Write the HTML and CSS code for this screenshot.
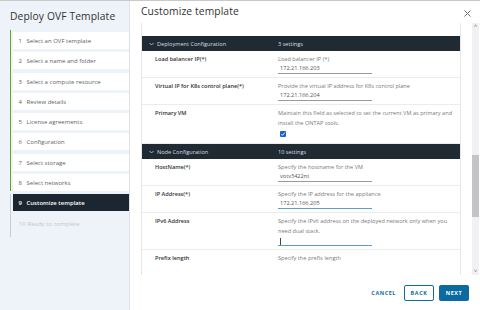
FILE: index.html
```html
<!DOCTYPE html>
<html lang="en">
<head>
<meta charset="utf-8">
<title>Deploy OVF Template</title>
<link rel="stylesheet" href="styles.css">
</head>
<body>
<div class="window">
  <aside class="sidebar">
    <h1 class="wiz-title">Deploy OVF Template</h1>
    <div class="steps">
      <div class="track done">
        <div class="step"><span class="num">1</span>Select an OVF template</div>
        <div class="step"><span class="num">2</span>Select a name and folder</div>
        <div class="step"><span class="num">3</span>Select a compute resource</div>
        <div class="step"><span class="num">4</span>Review details</div>
        <div class="step"><span class="num">5</span>License agreements</div>
        <div class="step"><span class="num">6</span>Configuration</div>
        <div class="step"><span class="num">7</span>Select storage</div>
        <div class="step"><span class="num">8</span>Select networks</div>
      </div>
      <div class="track todo">
        <div class="step active"><span class="num">9</span>Customize template</div>
        <div class="step disabled"><span class="num">10</span>Ready to complete</div>
      </div>
    </div>
  </aside>
  <main class="main">
    <header class="main-head">
      <h2 class="page-title">Customize template</h2>
      <span class="close" aria-label="Close">
        <svg width="7" height="7" viewBox="0 0 7 7"><path d="M0.5 0.5 L6.5 6.5 M6.5 0.5 L0.5 6.5" stroke="#6b6b6b" stroke-width="1" fill="none"/></svg>
      </span>
    </header>
    <div class="content">
      <div class="panel">
        <div class="group-head">
          <div class="gh-name"><span class="chev"><svg width="5" height="4" viewBox="0 0 5 4"><path d="M0.5 1 L2.5 3 L4.5 1" stroke="#cfd4d8" stroke-width="0.8" fill="none"/></svg></span>Deployment Configuration</div>
          <div class="gh-count">3 settings</div>
        </div>
        <div class="row">
          <div class="label">Load balancer IP(*)</div>
          <div class="value">
            <div class="desc">Load balancer IP (*)</div>
            <div class="input">172.21.166.203</div>
          </div>
        </div>
        <div class="row">
          <div class="label">Virtual IP for K8s control plane(*)</div>
          <div class="value">
            <div class="desc">Provide the virtual IP address for K8s control plane</div>
            <div class="input">172.21.166.204</div>
          </div>
        </div>
        <div class="row">
          <div class="label">Primary VM</div>
          <div class="value">
            <div class="desc">Maintain this field as selected to set the current VM as primary and install the ONTAP tools.</div>
            <span class="checkbox"><svg width="6" height="6" viewBox="0 0 6 6"><path d="M1.3 3.1 L2.5 4.3 L4.8 1.6" stroke="#fff" stroke-width="0.9" fill="none"/></svg></span>
          </div>
        </div>
        <div class="group-head">
          <div class="gh-name"><span class="chev"><svg width="5" height="4" viewBox="0 0 5 4"><path d="M0.5 1 L2.5 3 L4.5 1" stroke="#cfd4d8" stroke-width="0.8" fill="none"/></svg></span>Node Configuration</div>
          <div class="gh-count">10 settings</div>
        </div>
        <div class="row">
          <div class="label">HostName(*)</div>
          <div class="value">
            <div class="desc">Specify the hostname for the VM</div>
            <div class="input">votv3422nt</div>
          </div>
        </div>
        <div class="row">
          <div class="label">IP Address(*)</div>
          <div class="value">
            <div class="desc">Specify the IP address for the appliance</div>
            <div class="input focus">172.21.166.205</div>
          </div>
        </div>
        <div class="row">
          <div class="label">IPv6 Address</div>
          <div class="value">
            <div class="desc">Specify the IPv6 address on the deployed network only when you need dual stack.</div>
            <div class="input focus"><span class="caret"></span></div>
          </div>
        </div>
        <div class="row">
          <div class="label">Prefix length</div>
          <div class="value">
            <div class="desc">Specify the prefix length</div>
            <div class="input empty"></div>
          </div>
        </div>
      </div>
      <div class="scrollbar">
        <span class="arrow">&#708;</span>
        <div class="sb-track"><div class="sb-thumb"></div></div>
        <span class="arrow">&#709;</span>
      </div>
    </div>
    <footer class="actions">
      <span class="btn link">CANCEL</span>
      <span class="btn outline">BACK</span>
      <span class="btn solid">NEXT</span>
    </footer>
  </main>
</div>
</body>
</html>
```
FILE: styles.css
```css
* { box-sizing: border-box; }
html, body { margin: 0; padding: 0; }
body {
  width: 480px;
  height: 310px;
  overflow: hidden;
  background: #fff;
  font-family: "Open Sans", "Liberation Sans", sans-serif;
  color: #333;
}
.window {
  display: flex;
  width: 480px;
  height: 310px;
  border-top: 1px solid #c9c9c9;
}
.sidebar {
  width: 130px;
  flex: none;
  background: #eef2f9;
  border-right: 1px solid #dde1e8;
  padding-top: 8px;
}
.wiz-title {
  margin: 0 0 0 10px;
  font-size: 10.3px;
  font-weight: 400;
  line-height: 14px;
  color: #333;
  letter-spacing: 0.1px;
}
.steps {
  margin: 7px 0 0 10px;
}
.track {
  border-left: 1.5px solid #62a420;
  padding-left: 1.5px;
}
.track.done { padding-top: 2px; }
.track.todo { border-left-color: #c8ccd2; padding-bottom: 5px; }
.step {
  height: 17px;
  margin-bottom: 3.3px;
  background: #fff;
  font-size: 6px;
  line-height: 18px;
  color: #5f5f5f;
  padding-left: 6px;
  white-space: nowrap;
}
.track.todo .step:last-child { margin-bottom: 0; }
.step .num { display: inline-block; width: 8px; }
.step.active {
  background: #1c2630;
  color: #fff;
  font-weight: 600;
}
.step.disabled {
  background: transparent;
  color: #c3c7cd;
}
.step.disabled .num { width: 9px; }

.main {
  flex: 1;
  display: flex;
  flex-direction: column;
  min-width: 0;
}
.main-head {
  height: 22px;
  display: flex;
  align-items: center;
  justify-content: space-between;
  padding: 0 9px 0 11px;
}
.page-title {
  margin: 0;
  font-size: 10.3px;
  font-weight: 400;
  color: #333;
  letter-spacing: 0.1px;
  position: relative;
  top: -1px;
}
.close { display: flex; position: relative; top: 1px; }
.content {
  height: 252px;
  display: flex;
  padding-left: 11px;
}
.panel {
  width: 320px;
  height: 252px;
  overflow: hidden;
  border-left: 1px solid #e6e6e6;
  border-right: 1px solid #e6e6e6;
  padding-top: 13px;
}
.group-head {
  display: flex;
  height: 15px;
  align-items: center;
  background: #1f2a33;
  color: #d8dde2;
  font-size: 5.6px;
}
.gh-name {
  width: 136px;
  display: flex;
  align-items: center;
  padding-left: 7px;
}
.chev { display: flex; margin-right: 3px; }
.row {
  display: flex;
  border-bottom: 1px solid #ececec;
  padding: 3px 0 3px;
}
.label {
  width: 136px;
  padding-left: 13px;
  font-size: 5.6px;
  font-weight: 600;
  line-height: 10px;
  color: #333;
}
.value {
  width: 180px;
}
.desc {
  font-size: 5.6px;
  line-height: 10px;
  color: #7a7a7a;
}
.input {
  width: 94px;
  height: 10px;
  border-bottom: 1px solid #9a9a9a;
  font-size: 5.6px;
  line-height: 9px;
  color: #555;
  padding-left: 2px;
}
.input.focus { border-bottom-color: #5d9ec9; }
.input.empty {
  height: 15px;
  border-bottom: 2px solid #d9d9d9;
}
.caret {
  display: inline-block;
  width: 0.7px;
  height: 7px;
  background: #444;
  vertical-align: middle;
  margin-top: 2px;
}
.checkbox {
  display: flex;
  align-items: center;
  justify-content: center;
  width: 6px;
  height: 6px;
  margin: 3px 0 3px 2px;
  background: #1d62c7;
  border-radius: 1px;
}
.scrollbar {
  width: 7px;
  margin-left: 11px;
  display: flex;
  flex-direction: column;
  align-items: center;
  background: #f1f1f3;
}
.arrow {
  font-size: 6px;
  line-height: 7px;
  height: 7px;
  color: #777;
}
.sb-track {
  flex: 1;
  width: 100%;
  position: relative;
}
.sb-thumb {
  position: absolute;
  left: 0;
  right: 0;
  top: 125px;
  height: 62px;
  background: #c4c4c6;
}
.actions {
  flex: 1;
  display: flex;
  justify-content: flex-end;
  align-items: flex-start;
  padding: 10px 11px 0 0;
  gap: 5px;
}
.btn {
  height: 16px;
  display: flex;
  align-items: center;
  justify-content: center;
  font-size: 5.4px;
  font-weight: 700;
  letter-spacing: 0.6px;
  border-radius: 2px;
}
.btn.link { color: #0a6ea3; padding: 0 3px 0 0; }
.btn.outline {
  width: 30px;
  border: 1px solid #0a6ea3;
  color: #0a6ea3;
  background: #fff;
}
.btn.solid {
  width: 30px;
  background: #0b6aa0;
  color: #fff;
}
```
